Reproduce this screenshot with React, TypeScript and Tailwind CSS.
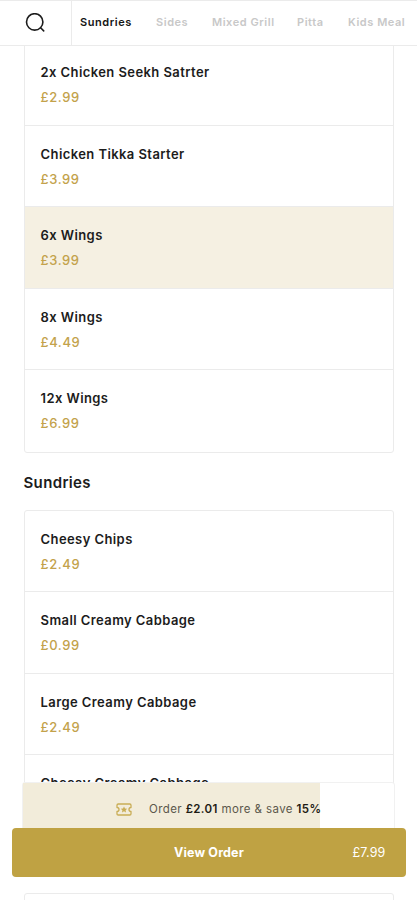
import clsx from "clsx";

type Item = { name: string; price: string; selected?: boolean };

const tabs = [
  { label: "Sundries", className: "w-[52px] mr-[24px] text-[#151515]" },
  { label: "Sides", className: "w-[33px] mr-[23px]" },
  { label: "Mixed Grill", className: "w-[63px] mr-[22px]" },
  { label: "Pitta", className: "w-[28px] mr-[23px]" },
  { label: "Kids Meal", className: "w-[60px]" },
];

const starters: Item[] = [
  { name: "2x Chicken Seekh Satrter", price: "£2.99" },
  { name: "Chicken Tikka Starter", price: "£3.99" },
  { name: "6x Wings", price: "£3.99", selected: true },
  { name: "8x Wings", price: "£4.49" },
  { name: "12x Wings", price: "£6.99" },
];

const sundries: Item[] = [
  { name: "Cheesy Chips", price: "£2.49" },
  { name: "Small Creamy Cabbage", price: "£0.99" },
  { name: "Large Creamy Cabbage", price: "£2.49" },
  { name: "Cheesy Creamy Cabbage", price: "£2.99" },
];

const SearchIcon = () => (
  <svg width="20" height="20" viewBox="0 0 20 20" fill="none" stroke="#1c1c1c" strokeWidth="1.6" strokeLinecap="round">
    <circle cx="9.7" cy="8.9" r="8.2" />
    <path d="M15.6 14.8 18.7 17.9" />
  </svg>
);

const TicketIcon = () => (
  <svg width="16" height="13" viewBox="0 0 16 13" fill="none" stroke="#c9ad55" strokeWidth="1.3" strokeLinejoin="round">
    <path d="M1 2.2C1 1.4 1.5 1 2.2 1h11.6c.7 0 1.2.4 1.2 1.2v2.3a2 2 0 0 0 0 4v2.3c0 .8-.5 1.2-1.200 1.200H2.200C1.500 12 1 11.600 1 10.800V8.500a2 2 0 0 0 0-4Z" />
    <path
      d="m8 3.400 1 2 2.200.3-1.600 1.500.4 2.200L8 8.350 6 9.400l.4-2.200L4.800 5.700l2.200-.3Z"
      fill="#c9ad55"
      stroke="none"
    />
  </svg>
);

const MenuItem = ({ name, price, selected }: Item) => (
  <li
    className={clsx(
      "h-[81.5px] border-b border-[#ebebeb] pl-4 pt-[19px] last:border-b-0",
      selected && "bg-[#f5f0e2]"
    )}
  >
    <p className="text-[13px] leading-[18px] font-semibold tracking-[0.42px] text-[#1c1c1c]">{name}</p>
    <p className="mt-[7.4px] text-[13px] leading-[18px] font-medium tracking-[0.6px] text-[#c3a24b]">{price}</p>
  </li>
);

const MenuList = ({ items }: { items: Item[] }) => (
  <ul className="rounded-[3px] border border-[#ebebeb] bg-white">
    {items.map((item) => (
      <MenuItem key={item.name} {...item} />
    ))}
  </ul>
);

const Heading = ({ children }: { children: string }) => (
  <h2 className="flex h-[57px] items-center pt-[5px] text-[15px] font-semibold tracking-[0.35px] text-[#1c1c1c]">
    {children}
  </h2>
);

const App = () => {
  return (
    <div className="relative h-[900px] w-[417px] overflow-hidden bg-white font-['Inter',sans-serif]">
      <header className="relative z-10 flex h-[46px] border-y border-[#ebebeb] bg-white">
        <button className="flex w-[72px] shrink-0 items-center border-r border-[#ebebeb] pl-[25px]">
          <SearchIcon />
        </button>
        <nav className="flex items-center pb-[2px] pl-2 text-[11px] font-semibold tracking-[0.55px] whitespace-nowrap text-[#c8c8c8]">
          {tabs.map((tab) => (
            <span key={tab.label} className={clsx("shrink-0", tab.className)}>
              {tab.label}
            </span>
          ))}
        </nav>
      </header>

      <main className="-mt-[3px] ml-[23.5px] w-[370px]">
        <MenuList items={starters} />
        <Heading>Sundries</Heading>
        <MenuList items={sundries} />
        <div className="h-[55px]" />
        <div className="h-10 rounded-[3px] border border-[#ebebeb]" />
      </main>

      <footer className="absolute inset-x-0 top-[782px]">
        <div className="relative ml-[22px] flex h-[47px] w-[373px] items-center rounded-t-[3px] border border-[#f1f1f1] bg-white">
          <div className="absolute inset-y-0 left-0 w-[297px] bg-[#f2ecda]" />
          <div className="relative mt-[7px] ml-[93px] flex items-center">
            <TicketIcon />
            <p className="mt-px ml-[17px] text-[11.5px] tracking-[0.4px] whitespace-nowrap text-[#5c584c]">
              Order <b className="font-semibold text-[#1d1b14]">£2.01</b> more &amp; save{" "}
              <b className="font-semibold text-[#1d1b14]">15%</b>
            </p>
          </div>
        </div>
        <button className="relative -mt-px ml-3 flex h-[49px] w-[394px] items-center justify-center rounded-[4px] bg-[#bfa243] pt-px text-white">
          <span className="text-[12.5px] font-bold tracking-[0.15px]">View Order</span>
          <span className="absolute right-[20.5px] text-[12.5px] tracking-[0.15px]">£7.99</span>
        </button>
      </footer>
    </div>
  );
};

export default App;
